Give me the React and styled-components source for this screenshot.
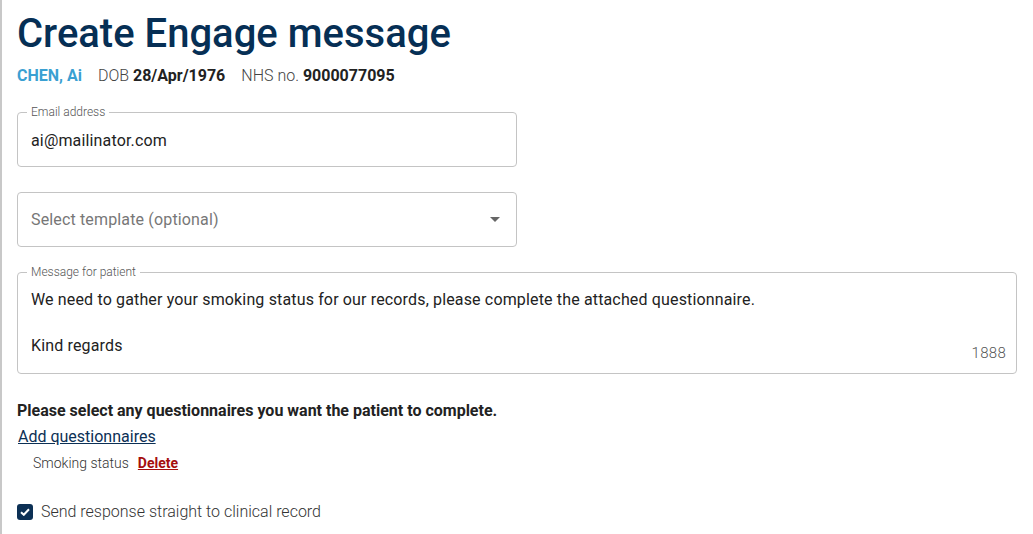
import React from 'react'
import styled, { createGlobalStyle } from 'styled-components'

const GlobalStyle = createGlobalStyle`
  html, body {
    margin: 0;
    padding: 0;
    background: #fff;
    font-family: Roboto, "Liberation Sans", Arial, sans-serif;
  }
`

const Page = styled.div`
  min-height: 534px;
  box-sizing: border-box;
  border-left: 2px solid #c8c8c8;
  padding: 10px 0 0 15px;
  display: flex;
  flex-direction: column;
`

const Title = styled.h1`
  margin: 0;
  font-size: 40px;
  font-weight: 500;
  line-height: 48px;
  color: #062f55;
`

const PatientBar = styled.div`
  display: flex;
  align-items: baseline;
  gap: 16px;
  margin-top: 8px;
  font-size: 16px;
  font-weight: 300;
  line-height: 20px;
  color: #444;
`

const PatientName = styled.span`
  color: #3aa0d2;
  font-weight: 700;
`

const Value = styled.b`
  color: #222;
  font-weight: 700;
`

const Field = styled.fieldset`
  margin: ${p => p.$top}px 0 0;
  width: ${p => p.$width}px;
  box-sizing: border-box;
  border: 1px solid #c4c4c4;
  border-radius: 4px;
  padding: 0 13px;
  min-inline-size: 0;
`

const Legend = styled.legend`
  margin-left: -4px;
  padding: 0 4px;
  font-size: 12px;
  line-height: 12px;
  font-weight: 300;
  color: #555;
`

const FieldRow = styled.div`
  height: ${p => p.$height}px;
  box-sizing: border-box;
  padding-bottom: ${p => p.$shift || 0}px;
  display: flex;
  align-items: center;
`

const FieldText = styled.div`
  flex: 1;
  font-size: 16px;
  line-height: 23px;
  letter-spacing: 0.15px;
  color: ${p => (p.$placeholder ? '#777' : '#222')};
  white-space: pre-wrap;
`

const Arrow = styled.div`
  width: 0;
  height: 0;
  border-left: 5px solid transparent;
  border-right: 5px solid transparent;
  border-top: 5px solid #666;
  margin-right: 3px;
`

const MessageBody = styled.div`
  display: flex;
  min-height: 75px;
  padding: 10px 0;
`

const Counter = styled.div`
  align-self: flex-end;
  font-size: 15px;
  font-weight: 300;
  line-height: 20px;
  color: #555;
  letter-spacing: 0.3px;
  margin-right: -3px;
`

const Heading = styled.div`
  margin-top: 27px;
  font-size: 16px;
  font-weight: 700;
  line-height: 20px;
  color: #222;
`

const LinkText = styled.a`
  margin-top: 6px;
  margin-left: 1px;
  font-size: 16px;
  line-height: 20px;
  color: #0c3055;
  text-decoration: underline;
  align-self: flex-start;
  cursor: pointer;
`

const QuestionRow = styled.div`
  display: flex;
  align-items: baseline;
  gap: 9px;
  margin: 7px 0 0 16px;
  font-size: 14px;
  font-weight: 300;
  line-height: 18px;
  color: #333;
`

const DeleteLink = styled.a`
  color: #a50e0e;
  font-weight: 700;
  font-size: 14px;
  text-decoration: underline;
  cursor: pointer;
`

const CheckRow = styled.label`
  display: flex;
  align-items: center;
  gap: 8px;
  margin-top: 30px;
  font-size: 16px;
  font-weight: 300;
  line-height: 20px;
  color: #333;
`

const CheckBox = styled.span`
  width: 16px;
  height: 16px;
  border-radius: 3px;
  background: #0c3055;
  display: flex;
  align-items: center;
  justify-content: center;
`

const App = () => {
  return (
    <>
      <GlobalStyle />
      <Page>
        <Title>Create Engage message</Title>
        <PatientBar>
          <PatientName>CHEN, Ai</PatientName>
          <span>DOB <Value>28/Apr/1976</Value></span>
          <span>NHS no. <Value>9000077095</Value></span>
        </PatientBar>

        <Field $top={20} $width={500}>
          <Legend>Email address</Legend>
          <FieldRow $height={48} $shift={4}>
            <FieldText>ai@mailinator.com</FieldText>
          </FieldRow>
        </Field>

        <Field $top={25} $width={500}>
          <FieldRow $height={53}>
            <FieldText $placeholder>Select template (optional)</FieldText>
            <Arrow />
          </FieldRow>
        </Field>

        <Field $top={19} $width={1000}>
          <Legend>Message for patient</Legend>
          <MessageBody>
            <FieldText>{'We need to gather your smoking status for our records, please complete the attached questionnaire.\n\nKind regards'}</FieldText>
            <Counter>1888</Counter>
          </MessageBody>
        </Field>

        <Heading>Please select any questionnaires you want the patient to complete.</Heading>
        <LinkText>Add questionnaires</LinkText>
        <QuestionRow>
          <span>Smoking status</span>
          <DeleteLink>Delete</DeleteLink>
        </QuestionRow>

        <CheckRow>
          <CheckBox>
            <svg width="10" height="8" viewBox="0 0 10 8">
              <path d="M1 4.2 L3.8 6.8 L9 1.2" fill="none" stroke="#fff" strokeWidth="2" />
            </svg>
          </CheckBox>
          Send response straight to clinical record
        </CheckRow>
      </Page>
    </>
  )
}

export default App
